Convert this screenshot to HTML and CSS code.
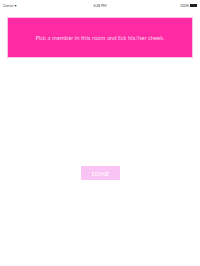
FILE: index.html
```html
<!DOCTYPE html>
<html>
<head>
<meta charset="utf-8">
<link rel="stylesheet" href="styles.css">
</head>
<body>
<div class="status">
  <span class="carrier">Carrier <span class="wifi">&#x25BE;</span></span>
  <span class="time">6:28 PM</span>
  <span class="batt">100% <span class="battery"></span></span>
</div>
<div class="card">
  <p class="prompt">Pick a member in this room and lick his/her cheek.</p>
</div>
<div class="actions">
  <div class="done">DONE</div>
</div>
</body>
</html>
```
FILE: styles.css
```css
html, body {
  margin: 0;
  padding: 0;
  background: #ffffff;
  width: 200px;
  height: 266px;
  overflow: hidden;
  font-family: "Lato", "DejaVu Sans", sans-serif;
}
.status {
  height: 9px;
  display: flex;
  align-items: center;
  justify-content: space-between;
  padding: 1px 3px 0 3px;
  font-size: 3.5px;
  color: #444;
  position: relative;
}
.time {
  position: absolute;
  left: 0;
  right: 0;
  text-align: center;
}
.wifi { font-size: 4px; }
.batt { display: flex; align-items: center; gap: 1px; }
.battery {
  display: inline-block;
  width: 7px;
  height: 2.5px;
  background: #222;
}
.card {
  margin: 8px 8px 0 8px;
  height: 39px;
  background: #ff2aa4;
  box-shadow: 0 0 0 1px #fbc2e6;
  display: flex;
  align-items: center;
  justify-content: center;
}
.prompt {
  margin: 0;
  color: #f7d4ee;
  font-size: 5.9px;
  text-align: center;
}
.actions {
  display: flex;
  justify-content: center;
  margin-top: 109px;
}
.done {
  width: 39px;
  height: 14px;
  background: #f9c4f3;
  color: #ffffff;
  font-size: 6px;
  display: flex;
  align-items: center;
  justify-content: center;
  margin-left: 1px;
}
```
